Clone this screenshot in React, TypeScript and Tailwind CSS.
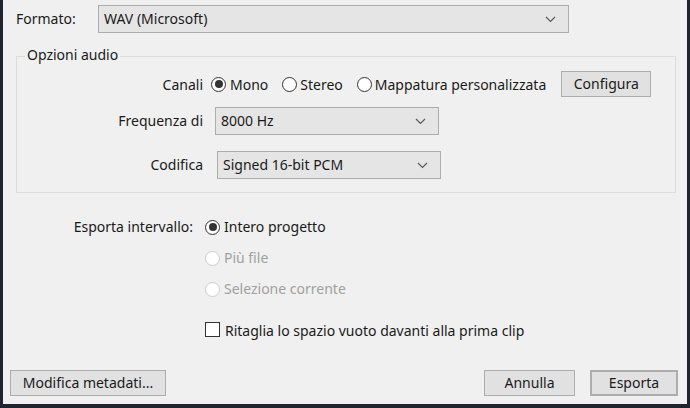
import React from "react";

const Chevron = () => (
  <svg width="11" height="7" viewBox="0 0 11 7" className="shrink-0">
    <path d="M1 1 L5.5 5.5 L10 1" fill="none" stroke="#5a5a5a" strokeWidth="1.2" />
  </svg>
);

const Select = ({ text, className }: { text: string; className: string }) => (
  <div
    className={`h-[28px] flex items-center justify-between bg-[#e5e5e5] border border-[#adadad] pl-[5px] pr-[12px] ${className}`}
  >
    <span>{text}</span>
    <Chevron />
  </div>
);

const Radio = ({ checked, disabled }: { checked?: boolean; disabled?: boolean }) => (
  <span
    className={`w-[15px] h-[15px] rounded-full border flex items-center justify-center shrink-0 bg-white ${
      disabled ? "border-[#cccccc]" : "border-[#333333]"
    }`}
  >
    {checked && <span className="w-[8px] h-[8px] rounded-full bg-[#333333]" />}
  </span>
);

const Button = ({ children, className }: { children: React.ReactNode; className: string }) => (
  <div
    className={`h-[26px] flex items-center justify-center bg-[#e1e1e1] border border-[#adadad] ${className}`}
  >
    {children}
  </div>
);

export default function App() {
  return (
    <div
      className="w-[690px] h-[408px] bg-[#1f2430] flex px-[3px] pb-[4px] text-[14px] text-[#1a1a1a] leading-none"
      style={{ fontFamily: '"Noto Sans", "Open Sans", sans-serif' }}
    >
      <div className="flex-1 bg-[#f0f0f0] flex flex-col">
        {/* Formato */}
        <div className="flex items-center mt-[5px] pl-[13px]">
          <span className="w-[82px]">Formato:</span>
          <Select text="WAV (Microsoft)" className="w-[471px]" />
        </div>

        {/* Opzioni audio */}
        <div className="relative ml-[13px] mt-[23px] w-[660px] h-[137px] border border-[#dcdcdc] flex flex-col pt-[14px]">
          <span className="absolute left-[8px] -top-[9px] bg-[#f0f0f0] px-[2px]">Opzioni audio</span>

          <div className="flex items-center h-[26px]">
            <span className="w-[186px] text-right pt-[2px]">Canali</span>
            <span className="ml-[8px]">
              <Radio checked />
            </span>
            <span className="ml-[4px] pt-[2px]">Mono</span>
            <span className="ml-[14px]">
              <Radio />
            </span>
            <span className="ml-[3px] pt-[2px]">Stereo</span>
            <span className="ml-[14px]">
              <Radio />
            </span>
            <span className="ml-[3px] pt-[2px]">Mappatura personalizzata</span>
            <Button className="ml-[15px] w-[90px]">Configura</Button>
          </div>

          <div className="flex items-center mt-[10px]">
            <span className="w-[186px] text-right">Frequenza di</span>
            <Select text="8000 Hz" className="ml-[12px] w-[224px]" />
          </div>

          <div className="flex items-center mt-[16px]">
            <span className="w-[186px] text-right">Codifica</span>
            <Select text="Signed 16-bit PCM" className="ml-[14px] w-[224px]" />
          </div>
        </div>

        {/* Esporta intervallo */}
        <div className="flex flex-col mt-[24px]">
          <div className="flex items-center h-[20px]">
            <span className="w-[190px] text-right">Esporta intervallo:</span>
            <span className="ml-[12px]">
              <Radio checked />
            </span>
            <span className="ml-[4px]">Intero progetto</span>
          </div>
          <div className="flex items-center h-[20px] mt-[11px] text-[#a0a0a0]">
            <span className="ml-[202px]">
              <Radio disabled />
            </span>
            <span className="ml-[4px]">Più file</span>
          </div>
          <div className="flex items-center h-[20px] mt-[11px] text-[#a0a0a0]">
            <span className="ml-[202px]">
              <Radio disabled />
            </span>
            <span className="ml-[4px]">Selezione corrente</span>
          </div>
          <div className="flex items-center h-[20px] mt-[20px]">
            <span className="ml-[202px] w-[15px] h-[15px] border border-[#333333] bg-white shrink-0" />
            <span className="ml-[5px] pt-[3px]">Ritaglia lo spazio vuoto davanti alla prima clip</span>
          </div>
        </div>

        <div className="flex-1" />

        {/* Buttons */}
        <div className="flex items-center pl-[7px] pr-[9px] pb-[8px]">
          <Button className="w-[156px]">Modifica metadati...</Button>
          <div className="flex-1" />
          <Button className="w-[91px]">Annulla</Button>
          <Button className="ml-[15px] w-[88px] border-2 border-[#0078d7]">Esporta</Button>
        </div>
      </div>
    </div>
  );
}
